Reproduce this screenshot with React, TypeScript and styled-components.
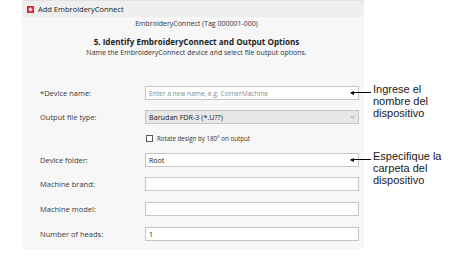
import * as React from "react";
import styled, { createGlobalStyle } from "styled-components";

const GlobalStyle = createGlobalStyle`
  html, body {
    margin: 0;
    padding: 0;
    background: #ffffff;
  }
  * {
    box-sizing: border-box;
  }
`;

const uiFont = `"Open Sans", "Noto Sans", sans-serif`;

const Screen = styled.div`
  display: flex;
  flex-direction: row;
  width: 458px;
  height: 262px;
  background: #ffffff;
  font-family: ${uiFont};
`;

const Dialog = styled.div`
  display: flex;
  flex-direction: column;
  margin-left: 22px;
  width: 342px;
  height: 249px;
  background: #f7f7f7;
`;

const TitleBar = styled.div`
  display: flex;
  flex-direction: row;
  align-items: center;
  gap: 4px;
  height: 17px;
  padding-left: 5px;
  background: #efefef;
  border-top: 1px solid #e2e2e2;
  font-size: 7.5px;
  color: #1a1a1a;
`;

const Header = styled.div`
  display: flex;
  flex-direction: column;
  align-items: center;
  padding-left: 7px;
  padding-top: 2px;
`;

const TagLine = styled.div`
  font-size: 7px;
  line-height: 10px;
  color: #333333;
`;

const Heading = styled.div`
  margin-top: 7px;
  font-size: 8.1px;
  font-weight: 700;
  line-height: 12px;
  color: #1e1e1e;
`;

const Description = styled.div`
  font-size: 7px;
  line-height: 10px;
  color: #333333;
`;

const Form = styled.div`
  display: flex;
  flex-direction: column;
  gap: 10px;
  margin-top: 28px;
  padding-left: 18px;
  padding-right: 5px;
`;

const Row = styled.div<{ $short?: boolean; $spaced?: boolean }>`
  position: relative;
  display: grid;
  grid-template-columns: 105px 1fr;
  align-items: center;
  height: ${(p) => (p.$short ? "9px" : "14px")};
  margin-top: ${(p) => (p.$spaced ? "1px" : "0")};
`;

const Label = styled.div`
  font-size: 7.5px;
  color: #3a3a3a;
  white-space: nowrap;
`;

const Field = styled.div<{ $grey?: boolean }>`
  display: flex;
  align-items: center;
  justify-content: space-between;
  height: 14px;
  padding: 0 3px;
  background: ${(p) => (p.$grey ? "#e7e7e7" : "#ffffff")};
  border: 1px solid #c6c6c6;
  font-size: 7px;
  color: #222222;
`;

const Value = styled.span<{ $size?: number }>`
  font-size: ${(p) => (p.$size ? `${p.$size}px` : "7px")};
`;

const Placeholder = styled.span`
  font-size: 6.6px;
  color: #8a8a8a;
`;

const CheckRow = styled.label`
  display: flex;
  align-items: center;
  gap: 4px;
  margin-left: 1px;
  font-size: 6.2px;
  color: #333333;
`;

const Box = styled.span`
  width: 7px;
  height: 7px;
  border: 1px solid #5a5a5a;
  background: #ffffff;
`;

const Callout = styled.div`
  position: absolute;
  top: -3px;
  left: calc(100% - 8px);
  display: flex;
  flex-direction: row;
  align-items: flex-start;
  gap: 2px;
`;

const Leader = styled.div`
  position: relative;
  width: 20px;
  height: 1px;
  margin-top: 9px;
  background: #000000;
  &::before {
    content: "";
    position: absolute;
    left: -1px;
    top: -1.5px;
    border-top: 2px solid transparent;
    border-bottom: 2px solid transparent;
    border-right: 4px solid #000000;
  }
`;

const CalloutText = styled.div`
  font-family: "Liberation Sans", Arial, sans-serif;
  font-size: 11px;
  line-height: 12px;
  color: #1a1a1a;
  white-space: nowrap;
`;

const Chevron = () => (
  <svg width="5" height="4" viewBox="0 0 5 4">
    <path d="M0.5 1 L2.5 3 L4.5 1" fill="none" stroke="#888" strokeWidth="0.8" />
  </svg>
);

const AppIcon = () => (
  <svg width="7" height="7" viewBox="0 0 7 7">
    <rect width="7" height="7" fill="#e0202a" />
    <g stroke="#ffffff" strokeWidth="0.7">
      <path d="M3.5 1.2 V5.8 M1.2 3.5 H5.8 M1.9 1.9 L5.1 5.1 M5.1 1.9 L1.9 5.1" />
    </g>
  </svg>
);

const Note = ({ lines }: { lines: string[] }) => (
  <Callout>
    <Leader />
    <CalloutText>
      {lines.map((l) => (
        <div key={l}>{l}</div>
      ))}
    </CalloutText>
  </Callout>
);

export default function App() {
  return (
    <>
      <GlobalStyle />
      <Screen>
        <Dialog>
          <TitleBar>
            <AppIcon />
            <span>Add EmbroideryConnect</span>
          </TitleBar>
          <Header>
            <TagLine>EmbroideryConnect (Tag 000001-000)</TagLine>
            <Heading>5. Identify EmbroideryConnect and Output Options</Heading>
            <Description>
              Name the EmbroideryConnect device and select file output options.
            </Description>
          </Header>
          <Form>
            <Row>
              <Label>*Device name:</Label>
              <Field>
                <Placeholder>Enter a new name, e.g. CornerMachine</Placeholder>
              </Field>
              <Note lines={["Ingrese el", "nombre del", "dispositivo"]} />
            </Row>
            <Row>
              <Label>Output file type:</Label>
              <Field $grey>
                <Value $size={7.2}>Barudan FDR-3 (*.U??)</Value>
                <Chevron />
              </Field>
            </Row>
            <Row $short>
              <span />
              <CheckRow>
                <Box />
                <span>Rotate design by 180° on output</span>
              </CheckRow>
            </Row>
            <Row>
              <Label>Device folder:</Label>
              <Field>
                <Value>Root</Value>
                <Chevron />
              </Field>
              <Note lines={["Especifique la", "carpeta del", "dispositivo"]} />
            </Row>
            <Row>
              <Label>Machine brand:</Label>
              <Field />
            </Row>
            <Row $spaced>
              <Label>Machine model:</Label>
              <Field />
            </Row>
            <Row $spaced>
              <Label>Number of heads:</Label>
              <Field>
                <Value>1</Value>
              </Field>
            </Row>
          </Form>
        </Dialog>
      </Screen>
    </>
  );
}
